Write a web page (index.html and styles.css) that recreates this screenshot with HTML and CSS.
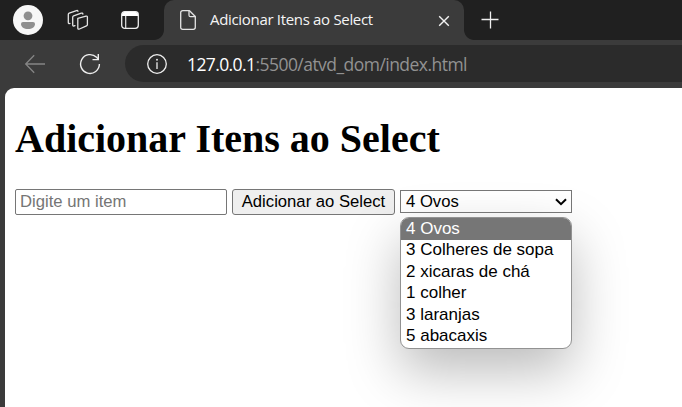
FILE: index.html
```html
<!DOCTYPE html>
<html lang="pt-br">
<head>
<meta charset="utf-8">
<title>Adicionar Itens ao Select</title>
<link rel="stylesheet" href="styles.css">
</head>
<body>
<header class="tabstrip">
  <div class="strip-tools">
    <svg class="avatar" width="30" height="30" viewBox="0 0 30 30"><circle cx="15" cy="15" r="15" fill="#f7f7f7"/><circle cx="15" cy="10.8" r="4.4" fill="#8f8f8f"/><path d="M10 17h10a2 2 0 0 1 2 2c0 3-3 5-7 5s-7-2-7-5a2 2 0 0 1 2-2z" fill="#8f8f8f"/></svg>
    <svg class="workspaces" width="22" height="22" viewBox="0 0 22 22" fill="none" stroke="#e4e4e4" stroke-width="1.3" stroke-linejoin="round" stroke-linecap="round"><path d="M10.8 9.3 19 7.1q1.4-.3 1.4 1v7.3q0 1-.9 1.4l-7 3.2q-1.7.6-1.7-.9z"/><path d="M8 16.7 6.7 17q-1 .2-1-1V8.2q0-1 .9-1.4l7.7-2.6q1.3-.4 1.6.8"/><path d="M3 14.4q-1.7.5-1.7-.9V5.6q0-1 .9-1.4l7.3-2.6q1.1-.3 1.5.6"/></svg>
    <svg class="panel" width="18" height="18" viewBox="0 0 18 18"><rect x=".7" y=".7" width="16.6" height="16.6" rx="3" fill="none" stroke="#eee" stroke-width="1.3"/><path d="M1 5V3.5Q1 1 3.5 1h11Q17 1 17 3.5V5z" fill="#fff"/><path d="M4.7 5v12" stroke="#e4e4e4" stroke-width="1.2"/></svg>
  </div>
  <div class="tab">
    <svg class="doc" width="16" height="20" viewBox="0 0 16 20" fill="none" stroke="#e4e4e4" stroke-width="1.3" stroke-linejoin="round"><path d="M2.7.7h6.8l5.8 5.8v10.8q0 2-2 2H2.7q-2 0-2-2V2.7q0-2 2-2z"/><path d="M9 .9v4.3q0 1.5 1.5 1.5h4.6"/></svg>
    <span class="tab-title">Adicionar Itens ao Select</span>
    <svg class="close" width="12" height="12" viewBox="0 0 12 12" stroke="#f2f2f2" stroke-width="1.4"><path d="m1.2 1.2 9.6 9.6M10.8 1.2 1.2 10.8"/></svg>
  </div>
  <svg class="plus" width="18" height="18" viewBox="0 0 18 18" stroke="#eee" stroke-width="1.3"><path d="M9.5 .5v17M.5 8.5h17"/></svg>
</header>
<nav class="toolbar">
  <svg class="back" width="22" height="20" viewBox="0 0 22 20" fill="none" stroke="#858585" stroke-width="1.3"><path d="M10.2 1.3 1.7 10l8.5 8.7M1.7 10H21"/></svg>
  <svg class="reload" width="22" height="22" viewBox="0 0 22 22" fill="none" stroke="#eee" stroke-width="1.4"><path d="M20.4 11A9.4 9.4 0 1 1 17.6 4.3L19.2 6"/><path d="M19.3 1v5.6h-5.8"/></svg>
  <div class="address">
    <svg class="info" width="22" height="22" viewBox="0 0 22 22"><circle cx="11" cy="11" r="9.3" fill="none" stroke="#eee" stroke-width="1.3"/><path d="M11 9.3V16" stroke="#eee" stroke-width="1.3"/><circle cx="11" cy="6.7" r=".95" fill="#eee"/></svg>
    <span class="url"><span class="host">127.0.0.1</span><span class="path">:5500/atvd_dom/index.html</span></span>
  </div>
</nav>
<main class="page">
  <h1>Adicionar Itens ao Select</h1>
  <div class="controls">
    <input class="field" type="text" placeholder="Digite um item">
    <button class="add" type="button">Adicionar ao Select</button>
    <div class="select">
      <div class="value">4 Ovos<svg width="12" height="8" viewBox="0 0 12 8" fill="none" stroke="#000" stroke-width="2"><path d="m1 1.2 5 5 5-5"/></svg></div>
      <ul class="options">
        <li class="selected">4 Ovos</li>
        <li>3 Colheres de sopa</li>
        <li>2 xicaras de chá</li>
        <li>1 colher</li>
        <li>3 laranjas</li>
        <li>5 abacaxis</li>
      </ul>
    </div>
  </div>
</main>
</body>
</html>
```
FILE: styles.css
```css
* { box-sizing: border-box; }
body {
  margin: 0;
  width: 682px;
  height: 407px;
  overflow: hidden;
  display: flex;
  flex-direction: column;
  background: #3b3b3b;
}
svg { display: block; flex: none; }
.tabstrip {
  height: 40px;
  flex: none;
  display: flex;
  align-items: center;
  background: #202020;
}
.strip-tools {
  width: 164px;
  display: flex;
  align-items: center;
  padding-left: 13px;
}
.workspaces { margin-left: 24px; }
.panel { margin-left: 32px; }
.tab {
  position: relative;
  width: 300px;
  height: 40px;
  display: flex;
  align-items: center;
  padding: 0 14px 0 16px;
  background: #3b3b3b;
  border-radius: 10px 10px 0 0;
}
.tab::before, .tab::after {
  content: "";
  position: absolute;
  bottom: 0;
  width: 10px;
  height: 10px;
}
.tab::before { left: -10px; background: radial-gradient(circle at 0 0, #202020 9.5px, #3b3b3b 10.3px); }
.tab::after { right: -10px; background: radial-gradient(circle at 100% 0, #202020 9.5px, #3b3b3b 10.3px); }
.tab-title {
  margin-left: 14px;
  margin-bottom: 2px;
  font: 15px/20px "Open Sans", sans-serif;
  letter-spacing: -0.32px;
  white-space: nowrap;
  color: #f5f5f5;
}
.close { margin-left: auto; margin-top: 1px; }
.plus { margin-left: 17px; }
.toolbar {
  height: 48px;
  flex: none;
  display: flex;
  align-items: center;
  padding: 0 0 1px 24px;
}
.reload { margin-left: 33px; margin-top: 1px; }
.address {
  margin-left: 24px;
  flex: 1;
  height: 37px;
  display: flex;
  align-items: center;
  padding-left: 21px;
  background: #2b2b2b;
  border-radius: 19px 0 0 19px;
}
.url {
  margin-left: 19px;
  font: 17.5px/24px "Open Sans", sans-serif;
  white-space: nowrap;
}
.host { color: #fff; letter-spacing: -0.6px; }
.path { color: #929292; letter-spacing: -0.54px; }
.page {
  flex: 1;
  margin-left: 5px;
  padding: 28px 0 0 10px;
  background: #fff;
  border-top-left-radius: 9px;
}
h1 {
  margin: 0;
  font: bold 40px/46px "Liberation Serif", serif;
  white-space: nowrap;
}
.controls {
  margin-top: 27px;
  display: flex;
  align-items: flex-start;
  gap: 5px;
  font: 16.67px/20px "Liberation Sans", sans-serif;
}
.field {
  width: 212px;
  height: 26px;
  margin: 0;
  padding: 0 4px;
  border: 1px solid #767676;
  border-radius: 2px;
  font: inherit;
}
.field::placeholder { color: #757575; }
.add {
  width: 163px;
  height: 26px;
  margin: 0;
  padding: 0;
  border: 1px solid #767676;
  border-radius: 3px;
  background: #efefef;
  font: inherit;
  white-space: nowrap;
  color: #000;
}
.select { position: relative; width: 172px; margin-top: 1px; }
.value {
  position: relative;
  z-index: 2;
  height: 23px;
  display: flex;
  align-items: center;
  justify-content: space-between;
  padding: 0 4px 0 5px;
  border: 1px solid #767676;
}
.options {
  position: absolute;
  top: 27px;
  left: 0;
  width: 172px;
  height: 132px;
  margin: 0;
  padding: 0;
  overflow: hidden;
  list-style: none;
  font-size: 17px;
  background: #fff;
  border: 1px solid #929292;
  border-radius: 9px;
  box-shadow: 0 22px 54px rgba(0, 0, 0, .27);
}
.options li { height: 21.5px; padding-left: 5px; line-height: 20px; white-space: nowrap; }
.options .selected { height: 22px; line-height: 21px; background: #767676; color: #fff; }
```
